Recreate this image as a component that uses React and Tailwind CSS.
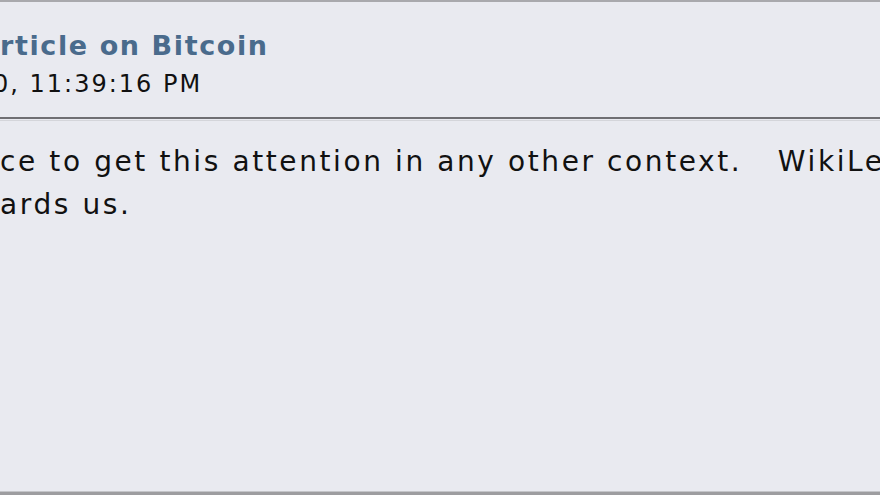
import React from 'react'

// text that continues off the left edge of the picture
const Cut = ({ hidden }) => (
  <span className="w-0 shrink-0 flex justify-end">
    <span className="whitespace-nowrap">{hidden}</span>
  </span>
)

const App = () => {
  return (
    <div className="w-[880px] h-[495px] overflow-hidden bg-[#e9eaf0] flex flex-col" style={{ fontFamily: '"DejaVu Sans", Verdana, sans-serif' }}>
      <div className="h-[2px] bg-[#a9a9ad] shrink-0" />

      <div className="pt-[26px] h-[115px] shrink-0">
        <div className="flex whitespace-nowrap text-[27px] font-bold text-[#4a6b8c] leading-[36px] tracking-[1.6px]">
          <Cut hidden="Re: PC World A" />
          <span>rticle on Bitcoin</span>
        </div>
        <div className="flex whitespace-nowrap text-[24px] text-[#111] leading-[36px] mt-[2px] tracking-[2px]">
          <Cut hidden="« on: December 11, 201" />
          <span className="-ml-[7px]">0, 11:39:16 PM</span>
        </div>
      </div>

      <div className="h-[2px] bg-[#6f6f73] shrink-0" />
      <div className="h-[1px] bg-[#d4d5da] shrink-0 mt-[1px]" />

      <div className="pt-[19px] text-[28px] text-[#111] leading-[43px] tracking-[2.6px] flex-1">
        <div className="flex whitespace-nowrap">
          <Cut hidden="It would have been ni" />
          <span>ce to get this attention in any other context.&nbsp;</span>
          <span className="ml-[24px]">WikiLeaks has kicked the hornet's nest, and the swarm is headed</span>
        </div>
        <div className="flex whitespace-nowrap">
          <Cut hidden="tow" />
          <span>ards us.</span>
        </div>
      </div>

      <div className="h-[1px] bg-[#c4c5c9] shrink-0" />
      <div className="h-[3px] bg-[#9d9da0] shrink-0" />
    </div>
  )
}

export default App
